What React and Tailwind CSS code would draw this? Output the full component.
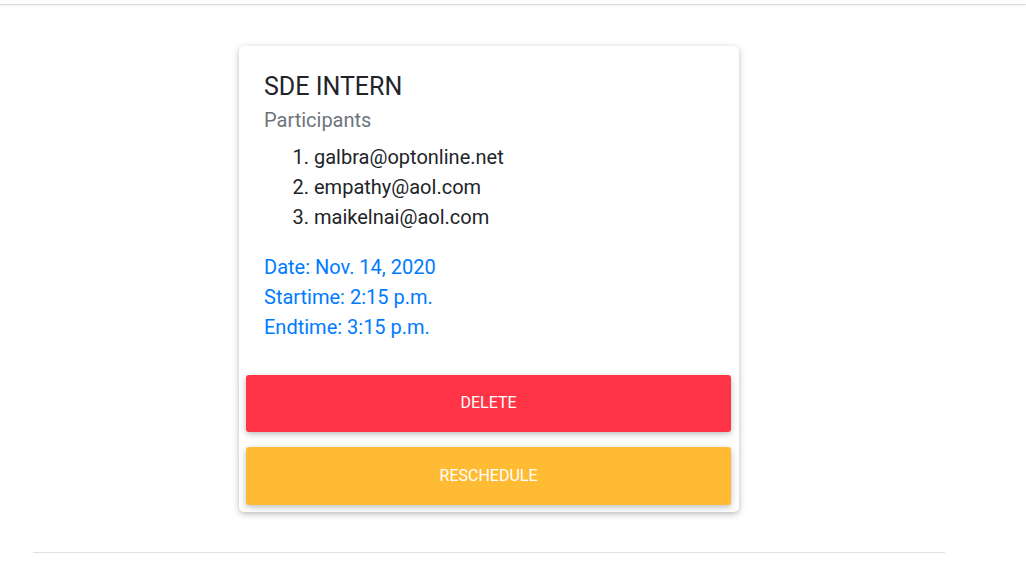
export default function App() {
  return (
    <div className="min-h-[561px] bg-white" style={{ fontFamily: "Roboto, 'Liberation Sans', sans-serif" }}>
      <div className="pt-[4px]">
        <div className="h-px bg-[#dcdcdc] shadow-[0_1px_2px_rgba(0,0,0,0.08)]" />
      </div>
      <div className="pt-[41px] pl-[239px]">
        <div className="w-[500px] rounded-[5px] bg-white shadow-[0_2px_5px_0_rgba(0,0,0,0.16),0_2px_10px_0_rgba(0,0,0,0.12)]">
          <div className="px-[25px] pt-[26px]">
            <h4 className="text-[25px] leading-[29px] text-[#212529]">SDE INTERN</h4>
            <h6 className="mt-[7px] text-[20px] leading-[24px] text-[#6c757d]">Participants</h6>
            <ol className="mt-[10px] list-decimal pl-[50px] text-[20px] leading-[30px] text-[#212529]">
              <li>galbra@optonline.net</li>
              <li>empathy@aol.com</li>
              <li>maikelnai@aol.com</li>
            </ol>
            <div className="mt-[20px] text-[20px] leading-[30px] text-[#007bff]">
              <p>Date: Nov. 14, 2020</p>
              <p>Startime: 2:15 p.m.</p>
              <p>Endtime: 3:15 p.m.</p>
            </div>
          </div>
          <div className="flex flex-col gap-[15px] pt-[33px] pb-[7px] pl-[7px] pr-[8px]">
            <button className="h-[57px] w-full rounded-[3px] bg-[#ff3547] pb-[2px] text-[16px] text-white shadow-[0_2px_5px_0_rgba(0,0,0,0.16),0_2px_10px_0_rgba(0,0,0,0.12)]">
              DELETE
            </button>
            <button className="h-[58px] w-full rounded-[3px] bg-[#ffbb33] text-[16px] text-white shadow-[0_2px_5px_0_rgba(0,0,0,0.16),0_2px_10px_0_rgba(0,0,0,0.12)]">
              RESCHEDULE
            </button>
          </div>
        </div>
      </div>
      <div className="mt-[40px] ml-[33px] h-px w-[912px] bg-[#e0e0e0]" />
    </div>
  );
}
